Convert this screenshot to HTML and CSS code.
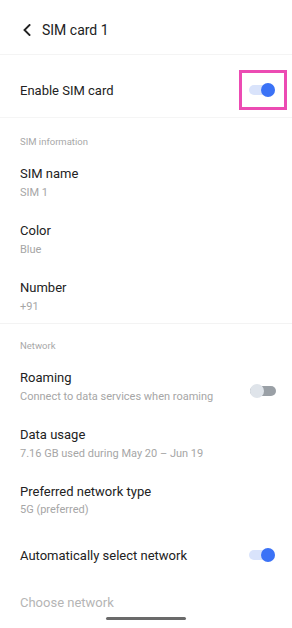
FILE: index.html
```html
<!DOCTYPE html>
<html>
<head>
<meta charset="utf-8">
<link rel="stylesheet" href="styles.css">
</head>
<body>
<div class="screen">
  <header class="header">
    <svg class="back" width="10" height="12" viewBox="0 0 10 12"><path d="M7.5 1 L2.5 6 L7.5 11" fill="none" stroke="#222" stroke-width="1.9" stroke-linecap="square"/></svg>
    <span class="title">SIM card 1</span>
  </header>

  <div class="row enable">
    <span class="label">Enable SIM card</span>
    <span class="toggle on"><span class="thumb"></span></span>
    <span class="highlight"></span>
  </div>

  <div class="section">SIM information</div>
  <div class="item"><div class="label">SIM name</div><div class="sub">SIM 1</div></div>
  <div class="item"><div class="label">Color</div><div class="sub">Blue</div></div>
  <div class="item last"><div class="label">Number</div><div class="sub">+91</div></div>

  <div class="section net">Network</div>
  <div class="item withtoggle">
    <div class="text"><div class="label">Roaming</div><div class="sub">Connect to data services when roaming</div></div>
    <span class="toggle off"><span class="thumb"></span></span>
  </div>
  <div class="item"><div class="label">Data usage</div><div class="sub">7.16 GB used during May 20 – Jun 19</div></div>
  <div class="item tight"><div class="label">Preferred network type</div><div class="sub">5G (preferred)</div></div>
  <div class="row auto">
    <span class="label">Automatically select network</span>
    <span class="toggle on"><span class="thumb"></span></span>
  </div>
  <div class="row choose"><span class="label disabled">Choose network</span></div>
  <div class="homebar"></div>
</div>
</body>
</html>
```
FILE: styles.css
```css
* { box-sizing: border-box; }
html, body { margin: 0; padding: 0; background: #fff; }
body { font-family: Roboto, "Noto Sans", sans-serif; color: #1c1c1c; }
.screen { width: 292px; height: 628px; overflow: hidden; position: relative; background: #fff; }
.header { height: 55px; padding: 6px 0 0 22px; display: flex; align-items: center; border-bottom: 1px solid #f4f4f4; }
.back { display: block; margin-right: 10px; }
.title { font-size: 14px; color: #222; }
.row { display: flex; align-items: center; justify-content: space-between; padding: 0 17px 0 20px; }
.label { font-size: 13px; line-height: 19px; color: #222; }
.sub { font-size: 11px; line-height: 19px; color: #a6a6a6; }
.enable { margin-top: 8px; height: 55px; border-bottom: 1px solid #f5f5f5; position: relative; }
.highlight { position: absolute; left: 239px; top: 7px; width: 48px; height: 40px; border: 3px solid #ec4bb3; }
.section { font-size: 9.5px; line-height: 16px; color: #a8a8a8; padding: 16px 20px 4px; }
.section.net { padding-top: 14px; }
.item { padding: 10px 20px 9px; height: 57px; }
.item.tight .sub { line-height: 17px; }
.item.last { height: 56px; border-bottom: 1px solid #f3f3f3; }
.withtoggle { display: flex; align-items: center; justify-content: space-between; padding-right: 16px; }
.toggle { position: relative; width: 26px; height: 10px; border-radius: 5px; display: block; flex: none; }
.toggle .thumb { position: absolute; top: -2px; width: 14px; height: 14px; border-radius: 50%; }
.toggle.on { background: #d9e3fb; }
.toggle.on .thumb { right: 0; background: #3b72f6; }
.toggle.off { background: #9aa0a6; }
.toggle.off .thumb { left: 0; background: #dfe4ea; }
.withtoggle .toggle { margin-top: 8px; }
.auto { height: 52px; }
.choose { height: 42px; }
.label.disabled { color: #b5b5b5; }
.homebar { position: absolute; left: 106px; top: 617px; width: 80px; height: 3px; border-radius: 2px; background: #6a6a6a; }
```
